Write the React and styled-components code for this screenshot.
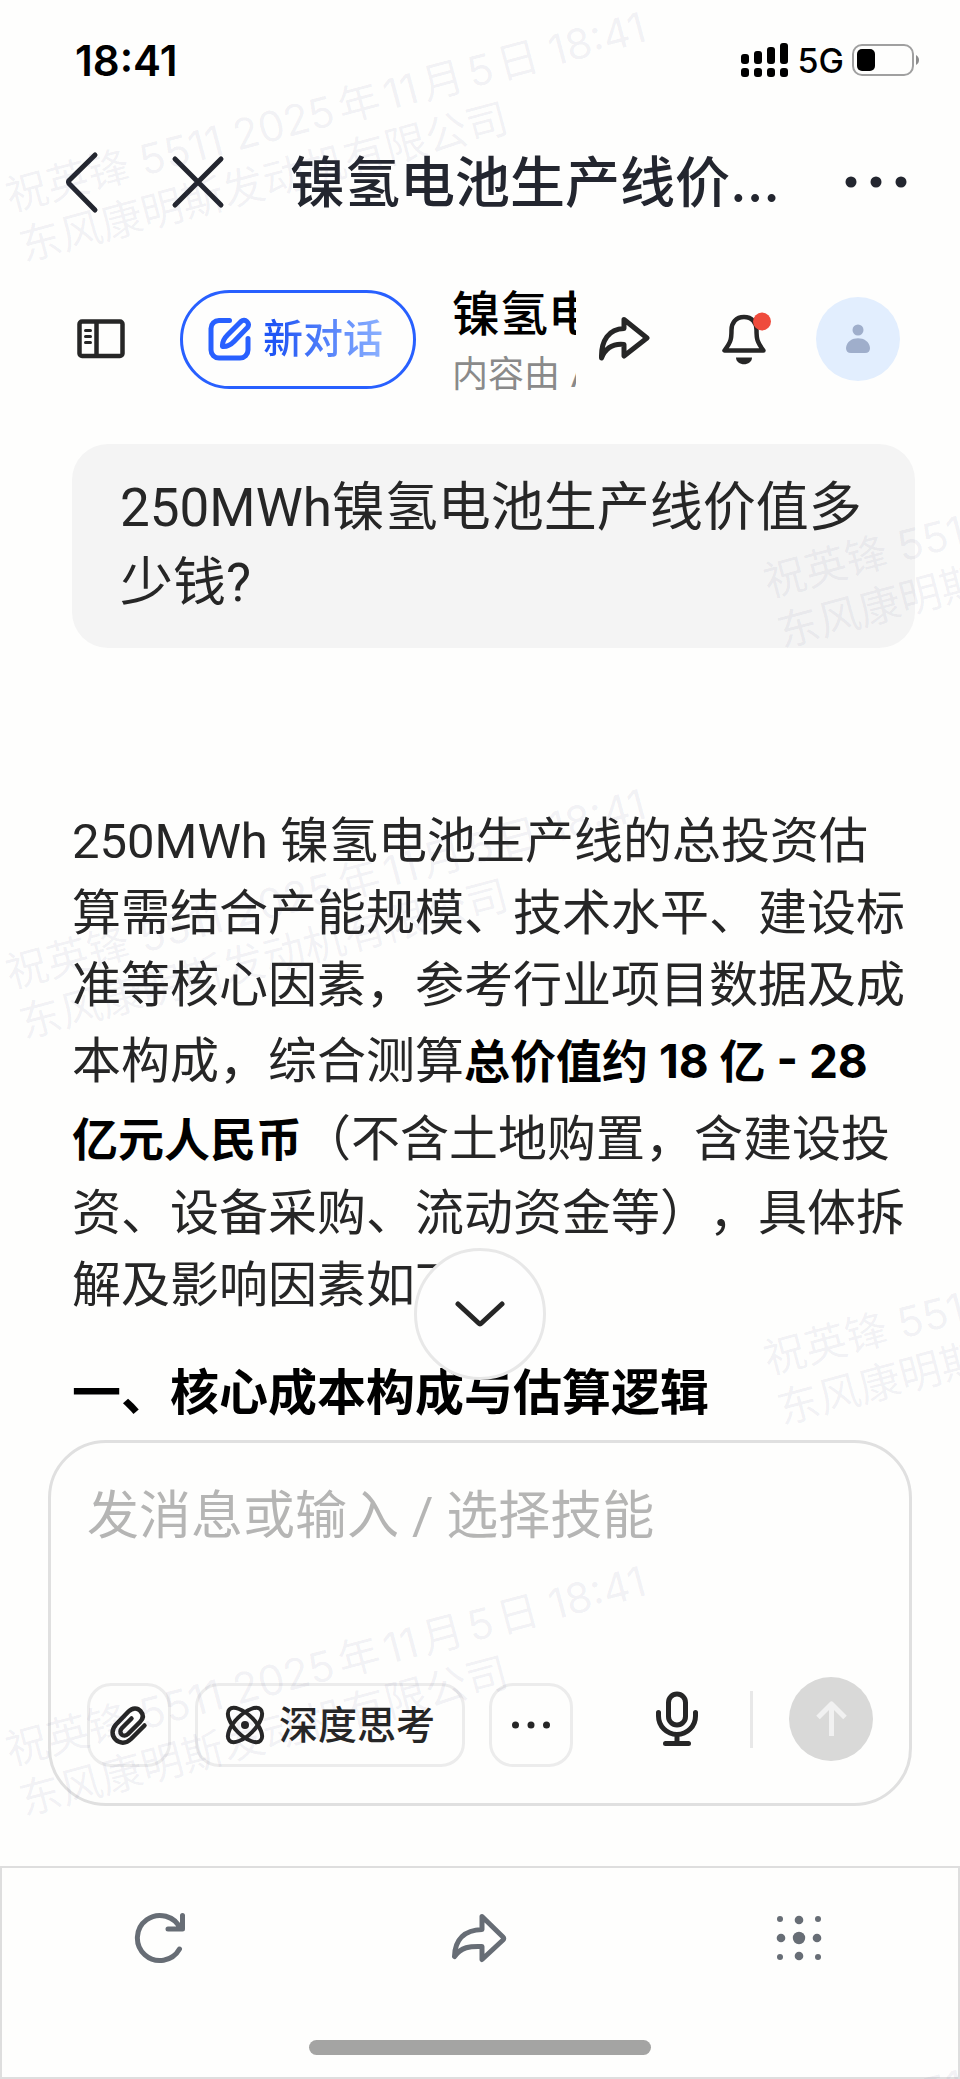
import React from "react";
import styled, { createGlobalStyle } from "styled-components";

const stamps = [
  { x: 0, y: 172 },
  { x: 758, y: 558 },
  { x: 0, y: 949 },
  { x: 758, y: 1335 },
  { x: 0, y: 1726 },
  { x: 758, y: 2112 },
];

const App = () => {
  return (
    <>
      <GlobalStyle />
      <Page>
        <StatusBar>
          <Time>18:41</Time>
          <StatusIcons>
            <SignalIcon />
            <Network>5G</Network>
            <BatteryIcon />
          </StatusIcons>
        </StatusBar>

        <NavBar>
          <IconButton aria-label="返回">
            <BackIcon />
          </IconButton>
          <IconButton aria-label="关闭">
            <CloseIcon />
          </IconButton>
          <NavTitle>镍氢电池生产线价...</NavTitle>
          <IconButton aria-label="更多">
            <MoreIcon />
          </IconButton>
        </NavBar>

        <Toolbar>
          <IconButton aria-label="侧边栏">
            <SidebarIcon />
          </IconButton>
          <NewChatButton>
            <EditIcon />
            <span>新对话</span>
          </NewChatButton>
          <ChatInfo>
            <ChatName>镍氢电池生产线价值</ChatName>
            <ChatNote>内容由 AI 生成</ChatNote>
          </ChatInfo>
          <Actions>
            <IconButton aria-label="分享">
              <ShareIcon />
            </IconButton>
            <IconButton aria-label="通知">
              <BellIcon />
            </IconButton>
            <Avatar aria-label="我的">
              <PersonIcon />
            </Avatar>
          </Actions>
        </Toolbar>

        <Chat>
          <Question>250MWh镍氢电池生产线价值多少钱?</Question>
          <Answer>
            <p>
              250MWh 镍氢电池生产线的总投资估算需结合产能规模、技术水平、建设标准等核心因素，参考行业项目数据及成本构成，综合测算
              <strong>总价值约 18 亿 - 28 亿元人民币</strong>
              （不含土地购置，含建设投资、设备采购、流动资金等），具体拆解及影响因素如下：
            </p>
            <h2>一、核心成本构成与估算逻辑</h2>
          </Answer>
          <ScrollDown aria-label="滚动到底部">
            <ChevronIcon />
          </ScrollDown>
        </Chat>

        <Composer>
          <MessageInput
            aria-label="消息"
            placeholder="发消息或输入 / 选择技能"
          />
          <ComposerRow>
            <Chip aria-label="添加附件">
              <ClipIcon />
            </Chip>
            <Chip $wide>
              <AtomIcon />
              <span>深度思考</span>
            </Chip>
            <Chip aria-label="更多技能">
              <SmallDotsIcon />
            </Chip>
            <SendGroup>
              <IconButton aria-label="语音输入">
                <MicIcon />
              </IconButton>
              <Divider />
              <SendButton aria-label="发送">
                <ArrowUpIcon />
              </SendButton>
            </SendGroup>
          </ComposerRow>
        </Composer>

        <BottomBar>
          <BottomActions>
            <IconButton aria-label="刷新">
              <RefreshIcon />
            </IconButton>
            <IconButton aria-label="转发">
              <ForwardIcon />
            </IconButton>
            <IconButton aria-label="应用">
              <GridIcon />
            </IconButton>
          </BottomActions>
          <HomeIndicator />
        </BottomBar>

        <Watermarks aria-hidden="true">
          {stamps.map((s) => (
            <Stamp key={`${s.x}-${s.y}`} $x={s.x} $y={s.y}>
              祝英锋 5511 2025年11月5日 18:41
              <br />
              东风康明斯发动机有限公司
            </Stamp>
          ))}
        </Watermarks>
      </Page>
    </>
  );
};

/* icons */

const SignalIcon = () => (
  <svg width="50" height="36" viewBox="0 0 50 36">
    {[0, 1, 2, 3].map((i) => (
      <g key={i}>
        <rect x={1 + i * 13} y={12 - i * 4 + (i ? 1 : 0)} width="8" height={10 + i * 4 - (i ? 1 : 0)} rx="3" />
        <rect x={1 + i * 13} y="26" width="8" height="9" rx="3" />
      </g>
    ))}
  </svg>
);

const BatteryIcon = () => (
  <svg width="68" height="34" viewBox="0 0 68 34">
    <rect x="1" y="2" width="60" height="30" rx="9" fill="none" stroke="#a0a0a0" strokeWidth="2" />
    <rect x="5" y="6" width="18" height="22" rx="5" />
    <path d="M64 12c4 2 4 8 0 10z" fill="#8c8c8c" />
  </svg>
);

const BackIcon = () => (
  <svg width="36" height="64" viewBox="0 0 36 64" fill="none" stroke="#23262f" strokeWidth="5" strokeLinecap="round" strokeLinejoin="round">
    <path d="M32 5 6 30.500Q5 32 6 33.500L32 60" />
  </svg>
);

const CloseIcon = () => (
  <svg width="54" height="54" viewBox="0 0 54 54" stroke="#23262f" strokeWidth="5" strokeLinecap="round">
    <path d="M4 4l46 46M50 4 4 50" />
  </svg>
);

const MoreIcon = () => (
  <svg width="62" height="14" viewBox="0 0 62 14" fill="#23262f">
    <circle cx="6" cy="7" r="5.500" />
    <circle cx="31" cy="7" r="5.500" />
    <circle cx="56" cy="7" r="5.500" />
  </svg>
);

const SidebarIcon = () => (
  <svg width="48" height="40" viewBox="0 0 48 40" fill="none" stroke="#262626" strokeWidth="4.500">
    <rect x="2.500" y="2.500" width="43" height="34.500" rx="2.500" />
    <path d="M19.500 2v35" />
    <path d="M8.500 11.500h5M8.500 17.500h5M8.500 23.500h5" strokeWidth="3" strokeLinecap="round" />
  </svg>
);

const EditIcon = () => (
  <svg width="46" height="46" viewBox="0 0 46 46" fill="none" stroke="#2860ff" strokeWidth="5" strokeLinecap="round" strokeLinejoin="round">
    <path d="M22.500 4.500H12A8 8 0 0 0 4 12.500V34a8 8 0 0 0 8 8h21a8 8 0 0 0 8-8V22.500" />
    <path d="M15.500 30.500c-.5-5 2-8.500 5-11.500L34 5.500c4-3.500 9.500 1.500 6.500 6L27 25.500c-3.500 3.500-7 5.500-11.500 5z" />
  </svg>
);

const ShareIcon = () => (
  <svg width="52" height="48" viewBox="0 0 52 48" fill="none" stroke="#262626" strokeWidth="5" strokeLinejoin="round">
    <path d="M26 4.500 49 23 26 41V29.500C16 28.500 8 32 3.500 43 3 25 11 14 26 13.500z" />
  </svg>
);

const BellIcon = () => (
  <svg width="54" height="56" viewBox="0 0 54 56" fill="none">
    <path
      d="M24 6C16 6 11.500 11.500 11.500 19c0 9-.5 12-7 20.500h39C37 31 36.500 28 36.500 19 36.500 11.500 32 6 24 6z"
      stroke="#262626"
      strokeWidth="4.500"
      strokeLinejoin="round"
    />
    <path d="M16 46.500h16c0 9-16 9-16 0z" fill="#262626" />
    <circle cx="42" cy="10.500" r="9" fill="#ef4b3c" />
  </svg>
);

const PersonIcon = () => (
  <svg width="26" height="30" viewBox="0 0 26 30" fill="#9faecb">
    <circle cx="13" cy="6" r="5.500" />
    <path d="M1 24C2 11 24 11 25 24q0 5-5 5H6q-5 0-5-5z" />
  </svg>
);

const ChevronIcon = () => (
  <svg width="52" height="28" viewBox="0 0 52 28" fill="none" stroke="#262626" strokeWidth="5" strokeLinecap="round" strokeLinejoin="round">
    <path d="M4 4l20.500 19q1.500 1.500 3 0L48 4" />
  </svg>
);

const ClipIcon = () => (
  <svg width="40" height="44" viewBox="0 0 40 44" fill="none" stroke="#262626" strokeWidth="4.500" strokeLinecap="round" strokeLinejoin="round">
    <path d="M35.500 22.500 22 36C17 41 10.500 40.500 6.500 36.500S2.500 26.500 7 21.500L19.500 8.500c4-4 9-4 12-.5s3 7.500-.5 11L19 31c-2 2-5 2-6.500.5s-1.500-4.500.5-6.500l9.500-9.500" />
  </svg>
);

const AtomIcon = () => (
  <svg width="40" height="40" viewBox="0 0 40 40" fill="none" stroke="#262626" strokeWidth="4">
    <ellipse cx="20" cy="20" rx="22" ry="10" transform="rotate(45 20 20)" />
    <ellipse cx="20" cy="20" rx="22" ry="10" transform="rotate(-45 20 20)" />
    <circle cx="20" cy="20" r="4" fill="#262626" stroke="none" />
  </svg>
);

const SmallDotsIcon = () => (
  <svg width="40" height="10" viewBox="0 0 40 10" fill="#262626">
    <circle cx="4.500" cy="5" r="3.500" />
    <circle cx="20" cy="5" r="3.500" />
    <circle cx="35.500" cy="5" r="3.500" />
  </svg>
);

const MicIcon = () => (
  <svg width="46" height="60" viewBox="0 0 46 60" fill="none" stroke="#262626" strokeWidth="5" strokeLinecap="round">
    <rect x="14.500" y="5" width="17" height="31" rx="8.500" />
    <path d="M4.500 23.500V27a18.500 18.500 0 0 0 37 0v-3.500M23 46v8M11.500 54.500h23" />
  </svg>
);

const ArrowUpIcon = () => (
  <svg width="32" height="38" viewBox="0 0 32 38" fill="none" stroke="#f1f1f1" strokeWidth="5" strokeLinejoin="round">
    <path d="M16.500 36V5M3 17.500 16.500 4 30 17.500" />
  </svg>
);

const RefreshIcon = () => (
  <svg width="54" height="54" viewBox="1 0 54 54" fill="none" stroke="#676d75" strokeWidth="5" strokeLinecap="round" strokeLinejoin="round">
    <path d="M46.500 38A22.500 22.500 0 1 1 47.500 18M49.500 4.500V18H35" />
  </svg>
);

const ForwardIcon = () => (
  <svg width="58" height="54" viewBox="1 0 58 54" fill="none" stroke="#676d75" strokeWidth="5" strokeLinecap="round" strokeLinejoin="round">
    <path d="M32 5.500 53 26q1.500 1.500 0 3L32 48.500V35.500C20 35 11 36 4.500 45.500 5 28 15 19 32 18.500z" />
  </svg>
);

const GridIcon = () => (
  <svg width="48" height="48" viewBox="0 0 48 48" fill="#676d75">
    <circle cx="5" cy="5" r="3" />
    <circle cx="24" cy="6" r="4.300" />
    <circle cx="43" cy="5" r="3" />
    <circle cx="6" cy="24" r="4.300" />
    <circle cx="24" cy="24" r="6.200" />
    <circle cx="42" cy="24" r="4.300" />
    <circle cx="5" cy="43" r="3" />
    <circle cx="24" cy="42" r="4.300" />
    <circle cx="43" cy="43" r="3" />
  </svg>
);

/* styles */

const GlobalStyle = createGlobalStyle`
  * {
    box-sizing: border-box;
  }

  body {
    margin: 0;
    background: #fefefd;
  }

  body, button {
    font-family: Inter, "Noto Sans CJK SC", sans-serif;
  }

  svg {
    display: block;
    flex: none;
  }
`;

const Page = styled.div`
  position: relative;
  display: flex;
  flex-direction: column;
  min-height: 100vh;
  overflow: hidden;
  color: #262626;
  text-spacing-trim: space-all;
`;

const StatusBar = styled.header`
  display: flex;
  align-items: center;
  justify-content: space-between;
  height: 120px;
  padding: 0 40px 0 75px;
  color: #000;
`;

const Time = styled.span`
  font-size: 42px;
  font-weight: 600;
`;

const StatusIcons = styled.div`
  display: flex;
  align-items: center;
  gap: 8px;
`;

const Network = styled.span`
  font-size: 34px;
  font-weight: 500;
`;

const IconButton = styled.button`
  display: flex;
  align-items: center;
  justify-content: center;
  padding: 0;
  border: none;
  background: none;
  cursor: pointer;
`;

const NavBar = styled.nav`
  display: flex;
  align-items: center;
  height: 124px;
  padding: 0 53px 0 63px;

  button + button {
    margin-left: 72px;
  }
`;

const NavTitle = styled.h1`
  flex: 1;
  margin: 0;
  padding-left: 65px;
  color: #23262f;
  font-size: 55px;
  font-weight: 500;
  line-height: 72px;
  white-space: nowrap;
`;

const Toolbar = styled.div`
  display: flex;
  align-items: center;
  height: 190px;
  padding: 0 60px 0 77px;
`;

const NewChatButton = styled.button`
  display: flex;
  align-items: center;
  gap: 10px;
  height: 99px;
  margin: 0 36px 0 55px;
  padding: 0 30px 0 24px;
  border: 3px solid #2860ff;
  border-radius: 50px;
  background: none;
  font-size: 40px;
  font-weight: 500;
  white-space: nowrap;
  cursor: pointer;

  span {
    padding-bottom: 6px;
    background: linear-gradient(90deg, #1f55f5 10%, #8db2ff);
    background-clip: text;
    color: transparent;
  }
`;

const ChatInfo = styled.div`
  flex: 1;
  min-width: 0;
  padding-top: 10px;
  overflow: hidden;
  white-space: nowrap;
`;

const ChatName = styled.div`
  color: #000;
  font-size: 48px;
  font-weight: 500;
  line-height: 60px;
`;

const ChatNote = styled.div`
  color: #8a8a8a;
  font-size: 36px;
  line-height: 60px;
`;

const Actions = styled.div`
  display: flex;
  align-items: center;
  margin-left: 22px;

  button + button {
    margin-left: 70px;
  }

  button:last-child {
    margin-left: 42px;
  }
`;

const Avatar = styled.button`
  display: flex;
  align-items: center;
  justify-content: center;
  width: 84px;
  height: 84px;
  padding: 0;
  border: none;
  border-radius: 50%;
  background: #e2eefe;
  cursor: pointer;
`;

const Chat = styled.main`
  position: relative;
  flex: 1;
  padding: 10px 45px 6px 72px;
  font-family: Roboto, "Noto Sans CJK SC", sans-serif;
`;

const Question = styled.div`
  padding: 27px 48px;
  border-radius: 36px;
  background: #f4f4f4;
  font-size: 53px;
  line-height: 75px;
`;

const Answer = styled.article`
  padding-top: 158px;
  font-size: 49px;
  line-height: 72px;

  p {
    margin: 0 0 36px;
  }

  strong {
    color: #000;
    font-family: Inter, "Noto Sans CJK SC", sans-serif;
    font-size: 46px;
    font-weight: 700;
    line-height: 78px;
  }

  h2 {
    margin: 0;
    color: #000;
    font-size: 49px;
    font-weight: 700;
    line-height: 72px;
  }
`;

const ScrollDown = styled.button`
  position: absolute;
  bottom: 60px;
  left: 50%;
  display: flex;
  align-items: center;
  justify-content: center;
  width: 132px;
  height: 132px;
  padding: 0;
  border: 3px solid #e8e8e8;
  border-radius: 50%;
  background: #fefefe;
  transform: translateX(-50%);
  cursor: pointer;
`;

const Composer = styled.section`
  margin: 0 48px 60px;
  padding: 36px;
  border: 3px solid #e0e0e0;
  border-radius: 58px;
`;

const MessageInput = styled.textarea`
  display: block;
  width: 100%;
  height: 198px;
  padding: 0;
  border: none;
  outline: none;
  background: none;
  color: #262626;
  font-family: Roboto, "Noto Sans CJK SC", sans-serif;
  font-size: 52px;
  line-height: 75px;
  resize: none;

  &::placeholder {
    color: #b5b5b4;
    opacity: 1;
  }
`;

const ComposerRow = styled.div`
  display: flex;
  align-items: flex-end;
  gap: 24px;
  height: 90px;
`;

const Chip = styled.button`
  display: flex;
  align-items: center;
  justify-content: center;
  gap: 14px;
  min-width: 84px;
  height: 84px;
  padding: ${(props) => (props.$wide ? "0 27px" : "0")};
  border: 3px solid #ececec;
  border-radius: 24px;
  background: none;
  color: #262626;
  font-size: 39px;
  font-weight: 500;
  white-space: nowrap;
  cursor: pointer;

  span {
    padding-bottom: 6px;
  }
`;

const SendGroup = styled.div`
  display: flex;
  align-items: center;
  align-self: flex-start;
  height: 84px;
  margin-left: auto;
`;

const Divider = styled.span`
  width: 3px;
  height: 57px;
  margin: 0 36px 0 50px;
  background: #e8e8e8;
`;

const SendButton = styled.button`
  display: flex;
  align-items: center;
  justify-content: center;
  width: 84px;
  height: 84px;
  padding: 0;
  border: none;
  border-radius: 50%;
  background: #d9d9d8;
  cursor: pointer;
`;

const BottomBar = styled.footer`
  padding-bottom: 22px;
  border: 2px solid #dedede;
`;

const BottomActions = styled.div`
  display: grid;
  grid-template-columns: repeat(3, 1fr);
  height: 140px;
`;

const HomeIndicator = styled.div`
  width: 342px;
  height: 15px;
  margin: 32px auto 0;
  border-radius: 8px;
  background: #a4a4a3;
`;

const Watermarks = styled.div`
  position: absolute;
  inset: 0;
  overflow: hidden;
  pointer-events: none;
`;

const Stamp = styled.div`
  position: absolute;
  top: ${(props) => props.$y}px;
  left: ${(props) => props.$x}px;
  color: rgba(70, 70, 130, 0.07);
  font-size: 42px;
  line-height: 52px;
  white-space: nowrap;
  text-autospace: normal;
  transform: rotate(-15deg);
  transform-origin: 0 0;
`;

export default App;
